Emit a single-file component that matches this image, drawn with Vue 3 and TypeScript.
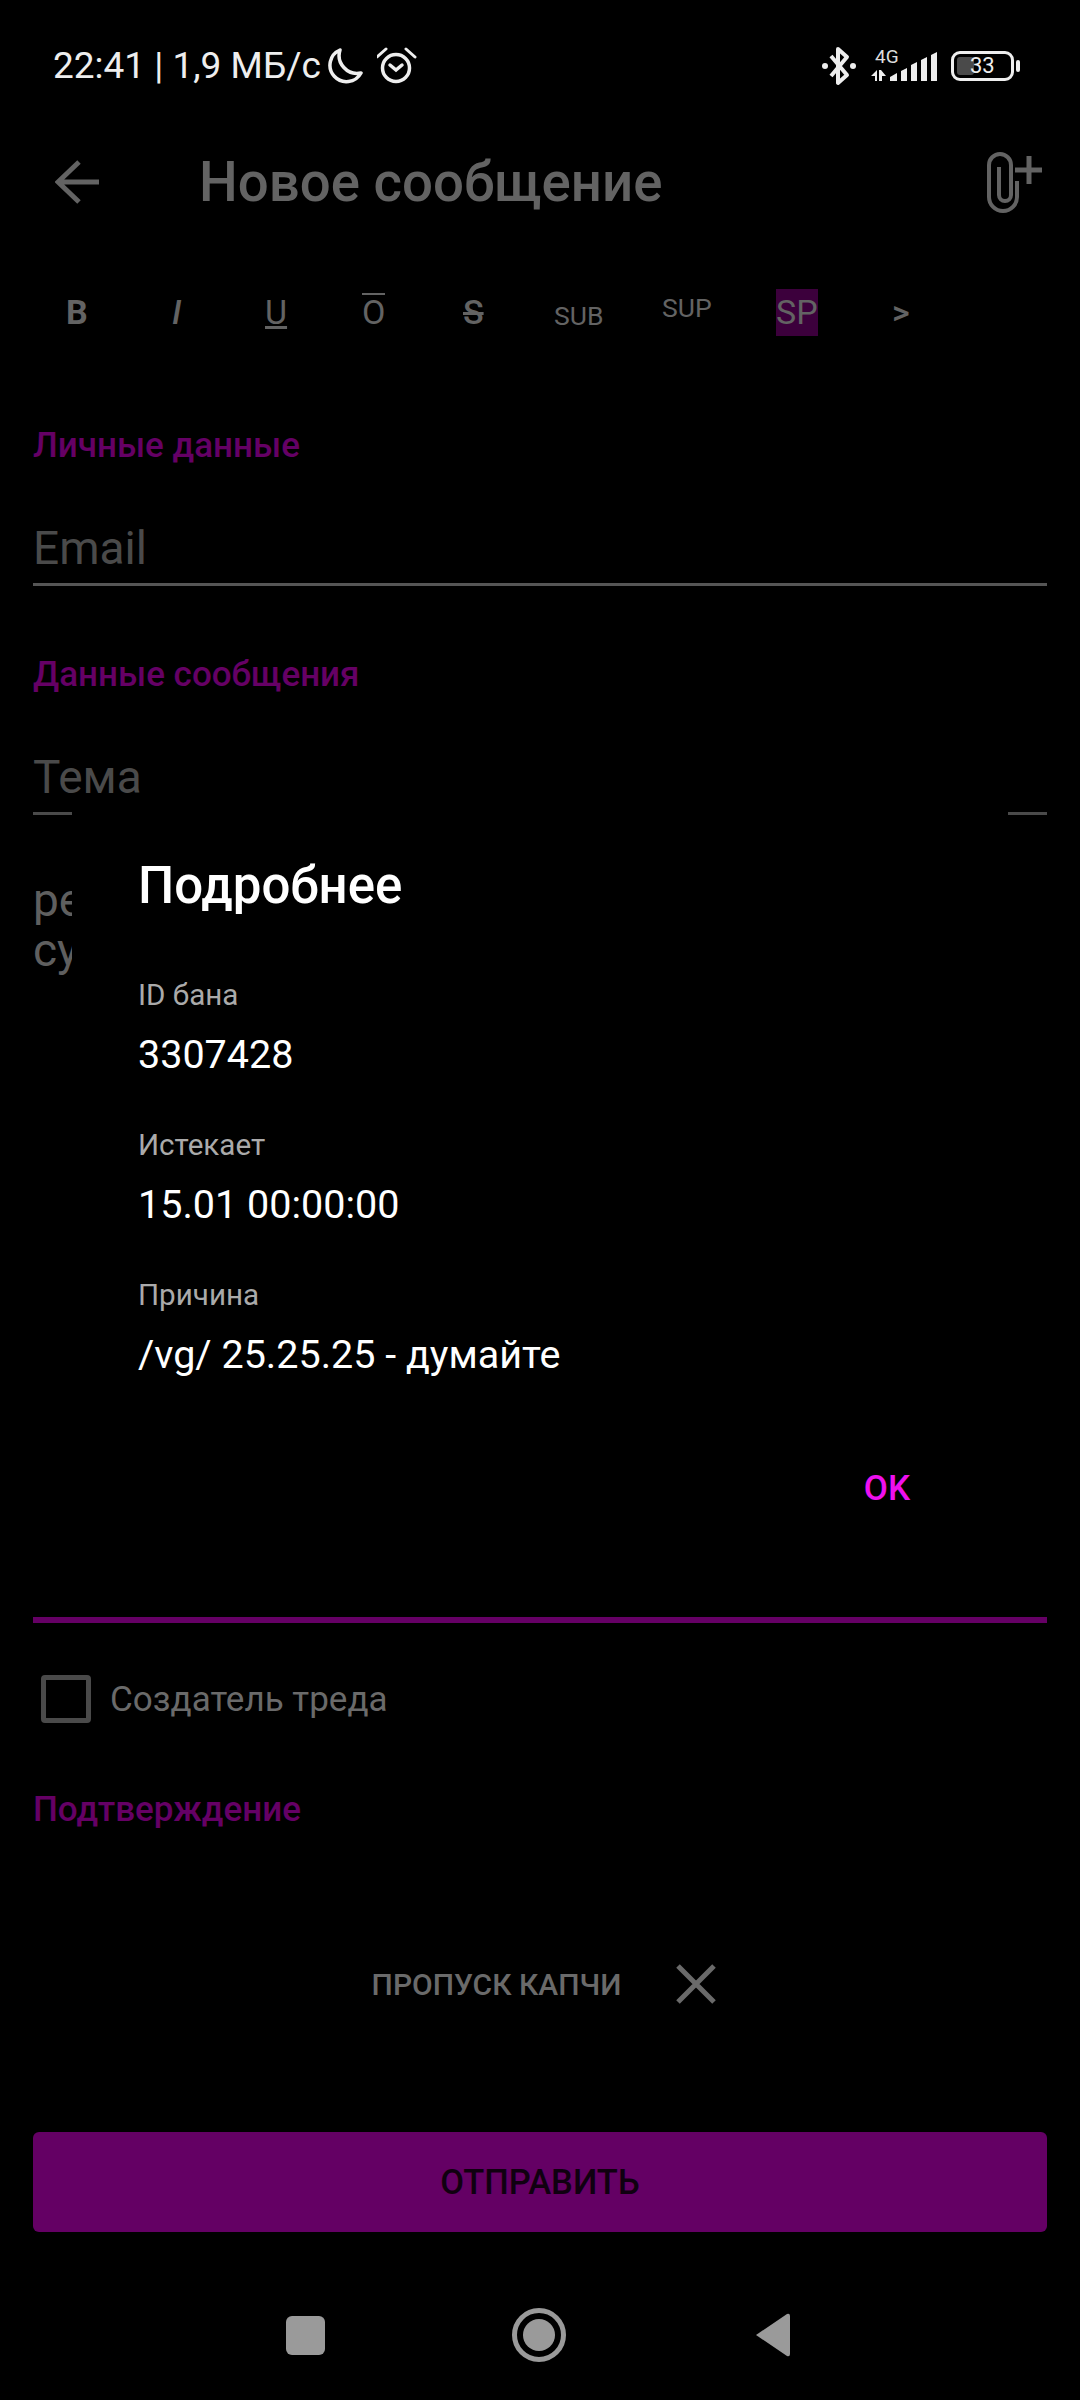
<script setup lang="ts">
const formatItems = [
  { label: "B", cls: "fmt-bold" },
  { label: "I", cls: "fmt-italic" },
  { label: "U", cls: "fmt-under" },
  { label: "O", cls: "fmt-over" },
  { label: "S", cls: "fmt-strike" },
  { label: "SUB", cls: "fmt-sub" },
  { label: "SUP", cls: "fmt-sup" },
  { label: "SP", cls: "fmt-spoiler" },
  { label: ">", cls: "fmt-quote" },
];

const banDetails = [
  { title: "ID бана", value: "3307428" },
  { title: "Истекает", value: "15.01 00:00:00" },
  { title: "Причина", value: "/vg/ 25.25.25 - думайте" },
];
</script>

<template>
  <div class="screen">
    <!-- Status bar -->
    <div class="status-bar">
      <div class="status-left">
        <span class="status-text">22:41 | 1,9 МБ/с</span>
        <svg class="moon" viewBox="0 0 36 38" width="36" height="38">
          <path d="M13 3 A16.5 16.5 0 1 0 34 26 A18 18 0 0 1 13 3 Z" fill="none" stroke="#eee" stroke-width="3.5" stroke-linejoin="round" />
        </svg>
        <svg class="alarm" viewBox="0 0 40 38" width="40" height="38">
          <circle cx="19" cy="21" r="13.5" fill="none" stroke="#eee" stroke-width="3.5" />
          <path d="M13 18 L19 23 L25 18" fill="none" stroke="#eee" stroke-width="3.5" stroke-linecap="round" />
          <path d="M0 10 L9 2 M38 10 L29 2" fill="none" stroke="#eee" stroke-width="3" stroke-linecap="round" />
        </svg>
      </div>
      <div class="status-right">
        <svg viewBox="0 0 36 40" width="36" height="40">
          <path d="M10 10 L26 29 L17 37 L17 3 L26 11 L10 30" fill="none" stroke="#eee" stroke-width="4" stroke-linejoin="round" />
          <circle cx="4" cy="20" r="3" fill="#eee" />
          <circle cx="32" cy="20" r="3" fill="#eee" />
        </svg>
        <div class="signal">
          <span class="net-type">4G</span>
          <svg viewBox="0 0 66 32" width="66" height="32">
            <path d="M0 26 L6 20 V31 H4 V26 Z M8 20 H10 L15 26 H11 V31 H8 Z" fill="#eee" />
            <path d="M19 31 V27 L26 23 V31 Z" fill="#eee" />
            <path d="M30 31 V21 L36 18 V31 Z" fill="#eee" />
            <path d="M40 31 V15 L46 12 V31 Z" fill="#eee" />
            <path d="M50 31 V10 L56 7 V31 Z" fill="#eee" />
            <path d="M60 31 V5 L66 2 V31 Z" fill="#eee" />
          </svg>
        </div>
        <div class="battery">
          <div class="battery-body">
            <span class="battery-fill"></span>
            <span class="battery-level">33</span>
          </div>
          <span class="battery-cap"></span>
        </div>
      </div>
    </div>

    <!-- Toolbar -->
    <div class="toolbar">
      <svg class="back" viewBox="0 0 44 46" width="44" height="46">
        <path d="M44 23 H4 M24 3 L3 23 L24 43" fill="none" stroke="#636363" stroke-width="5" />
      </svg>
      <span class="title">Новое сообщение</span>
      <svg class="attach" viewBox="0 0 56 62" width="56" height="62">
        <path d="M30 30 V46 a14 14 0 0 1 -28 0 V14 a11 11 0 0 1 22 0 V44 a6 6 0 0 1 -12 0 V16" fill="none" stroke="#636363" stroke-width="4" />
        <path d="M42 5 V33 M28 19 H55" fill="none" stroke="#636363" stroke-width="5" />
      </svg>
    </div>

    <!-- Formatting row -->
    <div class="format-row">
      <span v-for="item in formatItems" :key="item.label" class="fmt" :class="item.cls">{{ item.label }}</span>
    </div>

    <!-- Form -->
    <div class="form">
      <div class="section-label personal">Личные данные</div>
      <div class="field email">Email</div>
      <div class="section-label message">Данные сообщения</div>
      <div class="field subject">Тема</div>
      <div class="body-text">
        <div>ре</div>
        <div>су</div>
      </div>
      <div class="body-line"></div>
      <label class="check-row">
        <span class="check-box"></span>
        <span class="check-label">Создатель треда</span>
      </label>
      <div class="section-label confirm">Подтверждение</div>
      <div class="captcha-row">
        <span>ПРОПУСК КАПЧИ</span>
        <svg viewBox="0 0 40 40" width="40" height="40">
          <path d="M2 2 L38 38 M38 2 L2 38" fill="none" stroke="#6a6a6a" stroke-width="5" />
        </svg>
      </div>
      <div class="send-btn">ОТПРАВИТЬ</div>
    </div>

    <!-- Navigation bar -->
    <div class="nav-bar">
      <span class="nav-square"></span>
      <span class="nav-circle"><span class="nav-dot"></span></span>
      <svg viewBox="0 0 38 46" width="38" height="46">
        <path d="M33 2 L2 23 L33 44 Q36 45 36 42 V4 Q36 1 33 2 Z" fill="#9a9a9a" />
      </svg>
    </div>

    <!-- Dialog -->
    <div class="dialog">
      <div class="dialog-title">Подробнее</div>
      <div v-for="row in banDetails" :key="row.title" class="detail">
        <div class="detail-title">{{ row.title }}</div>
        <div class="detail-value">{{ row.value }}</div>
      </div>
      <div class="dialog-actions"><span class="ok">OK</span></div>
    </div>
  </div>
</template>

<style>
html,
body {
  background: #000;
}
</style>

<style scoped>
.screen {
  position: relative;
  width: 1080px;
  height: 2400px;
  background: #000;
  font-family: Roboto, "Liberation Sans", sans-serif;
  overflow: hidden;
}

/* Status bar */
.status-bar {
  height: 132px;
  padding: 46px 60px 0 53px;
  box-sizing: border-box;
  display: flex;
  justify-content: space-between;
  align-items: flex-start;
  color: #eee;
}
.status-left {
  display: flex;
  align-items: center;
  height: 40px;
}
.status-text {
  font-size: 37px;
  line-height: 40px;
}
.moon {
  margin-left: 6px;
}
.alarm {
  margin-left: 14px;
}
.status-right {
  display: flex;
  align-items: center;
  height: 40px;
}
.signal {
  position: relative;
  width: 66px;
  height: 32px;
  margin-left: 14px;
}
.net-type {
  position: absolute;
  left: 4px;
  top: -3px;
  font-size: 19px;
  line-height: 20px;
  color: #ddd;
}
.battery {
  display: flex;
  align-items: center;
  margin-left: 14px;
}
.battery-body {
  position: relative;
  width: 63px;
  height: 30px;
  border: 3px solid #eee;
  border-radius: 9px;
  box-sizing: border-box;
}
.battery-fill {
  position: absolute;
  left: 3px;
  top: 3px;
  bottom: 3px;
  width: 17px;
  background: #4a4a4a;
  border-radius: 3px;
}
.battery-level {
  position: absolute;
  left: 16px;
  top: 0;
  font-size: 22px;
  line-height: 24px;
}
.battery-cap {
  width: 4px;
  height: 12px;
  margin-left: 2px;
  background: #eee;
  border-radius: 2px;
}

/* Toolbar */
.toolbar {
  height: 100px;
  display: flex;
  align-items: center;
}
.back {
  margin-left: 55px;
}
.title {
  margin-left: 100px;
  font-size: 54.6px;
  font-weight: 500;
  color: #636363;
}
.attach {
  margin-left: auto;
  margin-right: 37px;
}

/* Formatting row */
.format-row {
  height: 72px;
  margin-top: 44px;
  color: #636363;
  display: grid;
  grid-template-columns: 106px 93px 97px 101px 91px 108px 114px 116px 40px;
  padding-left: 66px;
  align-items: center;
  font-size: 34px;
}
.fmt {
  justify-self: start;
}
.fmt-bold {
  font-weight: 700;
}
.fmt-italic {
  font-style: italic;
  font-weight: 500;
}
.fmt-under {
  text-decoration: underline;
}
.fmt-over {
  position: relative;
}
.fmt-over::before {
  content: "";
  position: absolute;
  left: 0;
  right: 0;
  top: 1px;
  height: 2px;
  background: #636363;
}
.fmt-strike {
  font-weight: 500;
  text-decoration: line-through;
}
.fmt-sub {
  font-size: 26.5px;
  margin-top: 6px;
}
.fmt-sup {
  font-size: 26.5px;
  margin-top: -10px;
}
.fmt-spoiler {
  background: #3c003c;
  line-height: 47px;
}
.fmt-quote {
  font-weight: 500;
}

/* Form */
.form {
  padding: 0 33px;
}
.section-label {
  font-size: 35px;
  font-weight: 500;
  color: #650065;
  line-height: 40px;
}
.personal {
  margin-top: 78px;
}
.field {
  font-size: 46px;
  color: #4a4a4a;
  line-height: 54px;
  padding-bottom: 8px;
  border-bottom: 3px solid #555;
}
.email {
  margin-top: 55px;
}
.message {
  margin-top: 69px;
}
.subject {
  margin-top: 55px;
  border-bottom-color: #4a4a4a;
}
.body-text {
  margin-top: 60px;
  font-size: 46px;
  line-height: 50px;
  color: #5f5f5f;
}
.body-line {
  height: 6px;
  margin-top: 642px;
  background: #650065;
}
.check-row {
  display: flex;
  align-items: center;
  margin: 51px 0 0 8px;
}
.check-box {
  width: 50px;
  height: 48px;
  box-sizing: border-box;
  border: 5px solid #4a4a4a;
  border-radius: 4px;
}
.check-label {
  margin-left: 19px;
  font-size: 35px;
  line-height: 48px;
  padding-top: 2px;
  color: #6a6a6a;
}
.confirm {
  margin-top: 66px;
}
.captcha-row {
  display: flex;
  align-items: center;
  justify-content: center;
  gap: 55px;
  margin-top: 134px;
  padding-left: 8px;
  font-size: 30px;
  font-weight: 500;
  color: #6a6a6a;
}
.send-btn {
  height: 100px;
  margin-top: 128px;
  display: flex;
  align-items: center;
  justify-content: center;
  background: #640064;
  border-radius: 6px;
  font-size: 34.5px;
  font-weight: 500;
  color: #100010;
}

/* Navigation bar */
.nav-bar {
  margin-top: 78px;
  height: 50px;
  display: flex;
  align-items: center;
}
.nav-square {
  width: 39px;
  height: 39px;
  margin-left: 286px;
  background: #9a9a9a;
  border-radius: 6px;
}
.nav-circle {
  width: 54px;
  height: 54px;
  margin-left: 187px;
  box-sizing: border-box;
  border: 5px solid #9a9a9a;
  border-radius: 50%;
  display: flex;
  align-items: center;
  justify-content: center;
}
.nav-dot {
  width: 32px;
  height: 32px;
  border-radius: 50%;
  background: #9a9a9a;
}
.nav-bar svg {
  margin-left: 188px;
}

/* Dialog */
.dialog {
  position: absolute;
  left: 72px;
  top: 805px;
  width: 936px;
  height: 805px;
  background: #000;
  padding: 53px 67px 0 66px;
  box-sizing: border-box;
  color: #fff;
}
.dialog-title {
  font-size: 51px;
  font-weight: 500;
  line-height: 56px;
}
.detail {
  margin-top: 50px;
}
.dialog-title + .detail {
  margin-top: 63px;
}
.detail-title {
  font-size: 29.6px;
  line-height: 36px;
  color: #aaa;
}
.detail-value {
  margin-top: 20px;
  font-size: 39.5px;
  line-height: 44px;
}
.dialog-actions {
  display: flex;
  justify-content: flex-end;
  margin-top: 90px;
  padding-right: 31px;
}
.ok {
  font-size: 35px;
  font-weight: 500;
  line-height: 44px;
  color: #ee10ee;
}
</style>
